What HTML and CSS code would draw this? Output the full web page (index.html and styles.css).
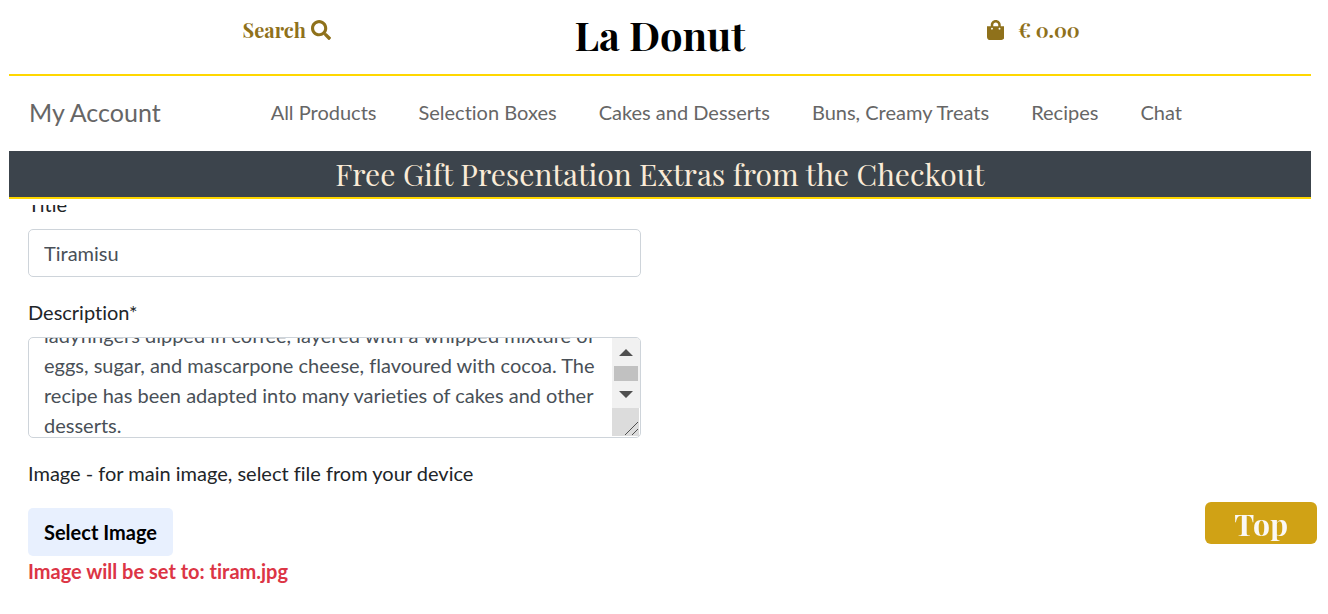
FILE: index.html
```html
<!DOCTYPE html>
<html lang="en">
<head>
<meta charset="utf-8">
<meta name="viewport" content="width=device-width, initial-scale=1">
<title>La Donut</title>
<link rel="stylesheet" href="styles.css">
</head>
<body>
<header class="site-header">
  <div class="top-bar">
    <a class="top-link" href="#search">Search
      <svg class="icon" viewBox="0 0 512 512" aria-hidden="true"><path d="M505 442.700 405.300 343c-4.500-4.500-10.600-7-17-7H372c27.600-35.300 44-79.700 44-128C416 93.100 322.900 0 208 0S0 93.100 0 208s93.100 208 208 208c48.300 0 92.700-16.400 128-44v16.300c0 6.400 2.500 12.500 7 17l99.700 99.700c9.400 9.400 24.600 9.400 33.900 0l28.300-28.300c9.400-9.400 9.400-24.600.1-34zM208 336c-70.700 0-128-57.200-128-128 0-70.700 57.200-128 128-128 70.700 0 128 57.200 128 128 0 70.700-57.200 128-128 128z"/></svg>
    </a>
    <h1 class="logo"><a href="#home">La Donut</a></h1>
    <a class="top-link cart" href="#bag">
      <svg class="icon" viewBox="0 0 448 512" aria-hidden="true"><path d="M352 160v-32C352 57.420 294.579 0 224 0S96 57.420 96 128v32H0v272c0 44.183 35.817 80 80 80h288c44.183 0 80-35.817 80-80V160h-96zm-192-32c0-35.290 28.710-64 64-64s64 28.710 64 64v32H160v-32zm160 120c-13.255 0-24-10.745-24-24s10.745-24 24-24 24 10.745 24 24-10.745 24-24 24zm-192 0c-13.255 0-24-10.745-24-24s10.745-24 24-24 24 10.745 24 24-10.745 24-24 24z"/></svg>
      <span>€ 0.00</span>
    </a>
  </div>
  <nav class="main-nav">
    <a class="account" href="#account">My Account</a>
    <div class="nav-links">
      <a href="#all">All Products</a>
      <a href="#boxes">Selection Boxes</a>
      <a href="#cakes">Cakes and Desserts</a>
      <a href="#buns">Buns, Creamy Treats</a>
      <a href="#recipes">Recipes</a>
      <a href="#chat">Chat</a>
    </div>
  </nav>
  <p class="banner">Free Gift Presentation Extras from the Checkout</p>
</header>
<main>
  <form class="product-form">
    <label class="label" for="title">Title</label>
    <input class="field" id="title" type="text" value="Tiramisu">
    <label class="label" for="description">Description*</label>
    <div class="area">
      <textarea id="description">ladyfingers dipped in coffee, layered with a whipped mixture of eggs, sugar, and mascarpone cheese, flavoured with cocoa. The recipe has been adapted into many varieties of cakes and other desserts.</textarea>
      <svg class="scrollbar" viewBox="0 0 28 99" aria-hidden="true">
        <path fill="#f1f1f1" d="M0 0h28v70H0z"/>
        <path fill="#dcdcdc" d="M0 70h27v28H0z"/>
        <path fill="#c1c1c1" d="M2 28h24v15H2z"/>
        <path fill="#505050" d="M7 18l7-7 7 7zM7 53h14l-7 7z"/>
        <path stroke="#505050" fill="none" d="M13 97l13-13M20 97l6-6"/>
      </svg>
    </div>
    <label class="label" for="select-image">Image - for main image, select file from your device</label>
    <button class="select-image" id="select-image" type="button">Select Image</button>
    <p class="notice">Image will be set to: tiram.jpg</p>
  </form>
</main>
<a class="to-top" href="#home">Top</a>
<script src="script.js"></script>
</body>
</html>
```
FILE: styles.css
```css
* {
  box-sizing: border-box;
}

body {
  margin: 0;
  background: #fff;
  color: #212529;
  font-family: Lato, sans-serif;
  font-size: 20px;
  line-height: 30px;
  font-variant-ligatures: none;
}

a {
  color: inherit;
  text-decoration: none;
}

.site-header {
  position: sticky;
  top: 0;
  z-index: 1;
  padding: 0 17px 6px 9px;
  background: #fff;
}

.top-bar {
  display: grid;
  grid-template-columns: repeat(3, 1fr);
  height: 76px;
  padding: 15px 7% 0;
  border-bottom: 2px solid #ffd700;
}

.top-link {
  display: flex;
  justify-content: center;
  align-items: center;
  gap: 5px;
  height: 30px;
  color: #8f711b;
  font-family: "Playfair Display", "Liberation Serif", serif;
  font-weight: 700;
}

.cart {
  gap: 14px;
}

.icon {
  height: 20px;
  fill: currentColor;
}

.logo {
  margin: 0;
  color: #000;
  font-family: "Playfair Display", "Liberation Serif", serif;
  font-size: 40px;
  line-height: 40px;
  text-align: center;
}

.main-nav {
  display: flex;
  align-items: center;
  gap: 110px;
  height: 75px;
  padding: 0 0 4px 20px;
  color: #666;
}

.account {
  font-size: 25px;
}

.nav-links {
  display: flex;
  gap: 42px;
}

.banner {
  margin: 0;
  border-bottom: 2px solid #ffd700;
  background: #3c444c;
  color: #faebd7;
  font-family: "Playfair Display", "Liberation Serif", serif;
  font-size: 30px;
  line-height: 46px;
  text-align: center;
}

.product-form {
  width: 50%;
  margin-top: -16px;
  padding: 0 23px 28px 28px;
}

.label {
  display: block;
  margin-bottom: 10px;
}

.field {
  display: block;
  width: 100%;
  height: 48px;
  margin-bottom: 20px;
  padding: 0 15px;
  border: 1px solid #ced4da;
  border-radius: 5px;
  color: #495057;
  font: inherit;
}

.area {
  display: flex;
  height: 101px;
  margin-bottom: 20px;
  overflow: hidden;
  border: 1px solid #ced4da;
  border-radius: 5px;
}

.area textarea {
  flex: 1;
  min-width: 0;
  padding: 6px 15px;
  overflow: hidden;
  border: 0;
  outline: 0;
  background: none;
  color: #495057;
  font: inherit;
  resize: none;
}

.scrollbar {
  width: 28px;
}

.select-image {
  height: 48px;
  margin-top: 10px;
  padding: 0 16px;
  border: 0;
  border-radius: 5px;
  background: #e8f0fe;
  color: #000;
  font: inherit;
  font-weight: 700;
}

.notice {
  margin: 0;
  color: #dc3545;
  font-weight: 700;
}

.to-top {
  position: fixed;
  right: 11px;
  bottom: 70px;
  z-index: 2;
  padding: 3px 29px 0;
  border-radius: 6px;
  background: #d0a215;
  color: #faf8f5;
  font-family: "Playfair Display", "Liberation Serif", serif;
  font-size: 30px;
  font-weight: 700;
  line-height: 39px;
}
```
FILE: script.js
```js
// Open the description scrolled past its first line.
document.getElementById('description').scrollTop = 24;
```
